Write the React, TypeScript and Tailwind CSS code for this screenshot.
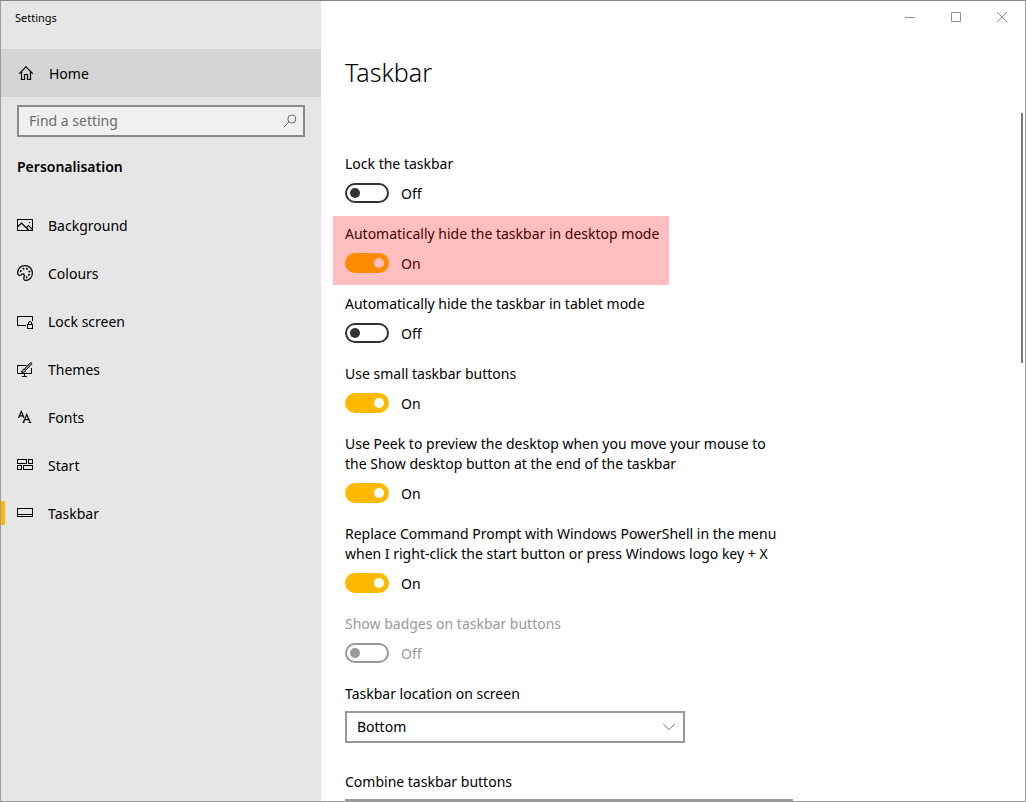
import { useState, type ReactNode } from "react";

function Glyph({ children }: { children: ReactNode }) {
  return (
    <svg
      viewBox="0 0 16 16"
      className="size-4 shrink-0"
      fill="none"
      stroke="currentColor"
      strokeWidth="1"
      aria-hidden="true"
    >
      {children}
    </svg>
  );
}

const HomeIcon = () => (
  <Glyph>
    <path d="M1.200 8.600 8 1.900l6.800 6.700M3.500 6.800v7.700h3V9.500h3v5h3V6.800" strokeWidth="1.2" />
  </Glyph>
);

const PictureIcon = () => (
  <Glyph>
    <rect x="0.5" y="2.5" width="15" height="11" />
    <path d="M1 9.500 4.500 6l7.300 7.200M9.300 10.600l2.200-2.100 3.800 3.800" strokeWidth="1.2" />
    <path d="M12 5.500h1.200" />
  </Glyph>
);

const PaletteIcon = () => (
  <Glyph>
    <path
      strokeWidth="1.2"
      d="M.7 8.300C.4 3.800 3.600.6 8 .6s7.400 3.200 7.400 7.400-3.100 7.400-6.600 7.400c-1.600 0-2.200-1-2-2.300.2-1.500.9-2.500.3-3.500-.5-.9-1.400-.9-2.300-.2-.8.7-1.600 1.300-2.700 1C1.200 10.200.8 9.400.7 8.300Z"
    />
    <g fill="currentColor" stroke="none">
      <circle cx="3.800" cy="6" r="1" />
      <circle cx="6.500" cy="3.700" r="1" />
      <circle cx="10" cy="3.800" r="1" />
      <circle cx="12.400" cy="6.500" r="1" />
      <circle cx="12" cy="9.800" r="1" />
      <circle cx="9.600" cy="12.200" r="1" />
    </g>
  </Glyph>
);

const LockScreenIcon = () => (
  <Glyph>
    <path d="M9 12.500H.5v-9h15V8" />
    <rect x="10.5" y="11.500" width="5" height="4" />
    <path d="M11.500 11.500V10a1.500 1.500 0 0 1 3 0v1.500" />
  </Glyph>
);

const ThemesIcon = () => (
  <Glyph>
    <path d="M9.500 4.500h-9v8h14V7M7.500 12.500v3M5 15.500h5" />
    <path
      d="M7.400 8 13.300 2c.9-.8 2 .2 1.200 1.100L8.700 9.300Z"
      fill="currentColor"
      fillOpacity="0.3"
    />
    <path
      d="M7.200 8.200c-1.200 0-1.700.7-1.800 1.600-.1.700-.5 1-1.200 1.100 1.900 1 4.200.4 4.300-1.400"
      fill="currentColor"
      fillOpacity="0.3"
    />
  </Glyph>
);

const FontsIcon = () => (
  <Glyph>
    <path d="m1.500 9 2.800-6.700L7 9M2.500 6.800H6" strokeWidth="1.2" />
    <path d="m6.400 13.500 3.300-8 3.500 8M7.600 10.700h4.300M5.500 13.500h2M11.500 13.500h2.800" strokeWidth="1.2" />
  </Glyph>
);

const StartIcon = () => (
  <Glyph>
    <rect x="0.5" y="2.500" width="9" height="4" />
    <rect x="11.5" y="2.500" width="4" height="4" />
    <rect x="0.5" y="8.500" width="4" height="4" />
    <rect x="6.5" y="8.500" width="9" height="4" />
  </Glyph>
);

const TaskbarIcon = () => (
  <Glyph>
    <rect x="0.5" y="3.500" width="15" height="8" />
    <path d="M.5 9.500h15" />
  </Glyph>
);

const sections = [
  { name: "Background", icon: <PictureIcon /> },
  { name: "Colours", icon: <PaletteIcon /> },
  { name: "Lock screen", icon: <LockScreenIcon /> },
  { name: "Themes", icon: <ThemesIcon /> },
  { name: "Fonts", icon: <FontsIcon /> },
  { name: "Start", icon: <StartIcon /> },
  { name: "Taskbar", icon: <TaskbarIcon />, current: true },
];

function Sidebar() {
  return (
    <aside className="flex w-80 shrink-0 flex-col bg-[#e6e6e6]">
      <div className="h-12 px-3.5 pt-2 text-[11px] leading-[18px]">Settings</div>
      <a href="#home" className="flex h-12 items-center gap-[15px] bg-[#d4d4d4] pl-[17px]">
        <HomeIcon />
        Home
      </a>
      <div className="mx-4 mt-2 flex h-8 items-center border-2 border-[#8a8a8a] bg-[#f0f0f0] pr-[5px] pl-2.5">
        <input
          type="search"
          aria-label="Find a setting"
          placeholder="Find a setting"
          className="h-full min-w-0 flex-1 bg-transparent pb-0.5 outline-none placeholder:text-[#6b6b6b]"
        />
        <button type="button" aria-label="Search" className="text-[#6b6b6b]">
          <Glyph>
            <circle cx="9.800" cy="6" r="4" />
            <path d="M7 9 1.800 14.200" />
          </Glyph>
        </button>
      </div>
      <h2 className="mt-5 px-4 leading-5 font-semibold">Personalisation</h2>
      <nav className="mt-6">
        {sections.map((s) => (
          <a
            key={s.name}
            href={"#" + s.name.toLowerCase().replace(" ", "-")}
            aria-current={s.current ? "page" : undefined}
            className="flex h-12 items-center"
          >
            <span className={s.current ? "h-6 w-1 bg-[#ffb900]" : "h-6 w-1"} />
            <span className="flex items-center gap-[15px] pl-3">
              {s.icon}
              {s.name}
            </span>
          </a>
        ))}
      </nav>
    </aside>
  );
}

type ToggleProps = {
  id: string;
  label: string;
  initial?: boolean;
  disabled?: boolean;
  highlighted?: boolean;
};

function Toggle({ id, label, initial = false, disabled, highlighted }: ToggleProps) {
  const [on, setOn] = useState(initial);
  return (
    <div className={disabled ? "relative text-[#999999]" : "relative"}>
      <label htmlFor={id} className="block max-w-[440px] leading-5">
        {label}
      </label>
      <div className="mt-[9px] flex h-5 items-center gap-3">
        <input
          id={id}
          type="checkbox"
          role="switch"
          checked={on}
          disabled={disabled}
          onChange={(e) => setOn(e.target.checked)}
          className="flex h-5 w-11 appearance-none items-center rounded-full border-2 border-[#333333] px-[3px] before:size-2.5 before:rounded-full before:bg-[#333333] checked:justify-end checked:border-[#ffb900] checked:bg-[#ffb900] checked:before:bg-white disabled:border-[#999999] disabled:before:bg-[#999999]"
        />
        <span className="pt-0.5 leading-5">{on ? "On" : "Off"}</span>
      </div>
      {highlighted && (
        <div className="pointer-events-none absolute -top-2 -bottom-3 -left-3 w-[336px] bg-[#ff0000]/25" />
      )}
    </div>
  );
}

function WindowButtons() {
  return (
    <div className="flex h-8 shrink-0 justify-end text-[#8f8f8f]">
      <button type="button" aria-label="Minimise" className="flex w-[46px] items-center justify-center">
        <svg className="size-2.5" viewBox="0 0 10 10" stroke="currentColor" aria-hidden="true">
          <path d="M0 5.500h10" />
        </svg>
      </button>
      <button type="button" aria-label="Maximise" className="flex w-[46px] items-center justify-center">
        <svg className="size-2.5" viewBox="0 0 10 10" stroke="currentColor" fill="none" aria-hidden="true">
          <path d="M.5.5h9v9h-9z" />
        </svg>
      </button>
      <button type="button" aria-label="Close" className="flex w-[46px] items-center justify-center">
        <svg className="size-2.5" viewBox="0 0 10 10" stroke="currentColor" aria-hidden="true">
          <path d="m0 0 10 10M10 0 0 10" />
        </svg>
      </button>
    </div>
  );
}

export default function App() {
  return (
    <div className="flex h-screen overflow-hidden border border-[#9b9b9b] border-t-[#858585] bg-white font-['Noto_Sans','Open_Sans',sans-serif] text-[14px] text-black">
      <Sidebar />
      <main className="relative flex min-w-0 flex-1 flex-col">
        <WindowButtons />
        <div className="px-6 pt-5">
          <h1 className="text-[25px] leading-[38px] font-[350]">Taskbar</h1>
          <div className="mt-[63px] flex max-w-[448px] flex-col gap-[21px]">
            <Toggle id="lock" label="Lock the taskbar" />
            <Toggle id="hide-desktop" label="Automatically hide the taskbar in desktop mode" initial highlighted />
            <Toggle id="hide-tablet" label="Automatically hide the taskbar in tablet mode" />
            <Toggle id="small" label="Use small taskbar buttons" initial />
            <Toggle
              id="peek"
              label="Use Peek to preview the desktop when you move your mouse to the Show desktop button at the end of the taskbar"
              initial
            />
            <Toggle
              id="powershell"
              label="Replace Command Prompt with Windows PowerShell in the menu when I right-click the start button or press Windows logo key + X"
              initial
            />
            <Toggle id="badges" label="Show badges on taskbar buttons" disabled />
            <div>
              <label htmlFor="location" className="block leading-5">
                Taskbar location on screen
              </label>
              <div className="mt-[7px] grid w-[340px] items-center">
                <select
                  id="location"
                  defaultValue="Bottom"
                  className="col-start-1 row-start-1 h-8 appearance-none border-2 border-[#999999] bg-white pb-0.5 pl-2.5"
                >
                  <option>Left</option>
                  <option>Top</option>
                  <option>Right</option>
                  <option>Bottom</option>
                </select>
                <svg
                  className="pointer-events-none z-10 col-start-1 row-start-1 mr-2.5 h-2 w-3 justify-self-end"
                  viewBox="0 0 12 8"
                  fill="none"
                  stroke="#666666"
                  aria-hidden="true"
                >
                  <path d="m.3 1 5.700 5.700L11.700 1" />
                </svg>
              </div>
            </div>
            <div className="mt-2">
              <label htmlFor="combine" className="block leading-5">
                Combine taskbar buttons
              </label>
              <select
                id="combine"
                className="mt-[7px] h-8 w-full appearance-none border-2 border-[#999999] bg-white pb-0.5 pl-2.5"
              >
                <option>Always, hide labels</option>
                <option>When taskbar is full</option>
                <option>Never</option>
              </select>
            </div>
          </div>
        </div>
        <div className="absolute top-28 right-0.5 h-[250px] w-0.5 bg-[#7a7a7a]" />
      </main>
    </div>
  );
}
